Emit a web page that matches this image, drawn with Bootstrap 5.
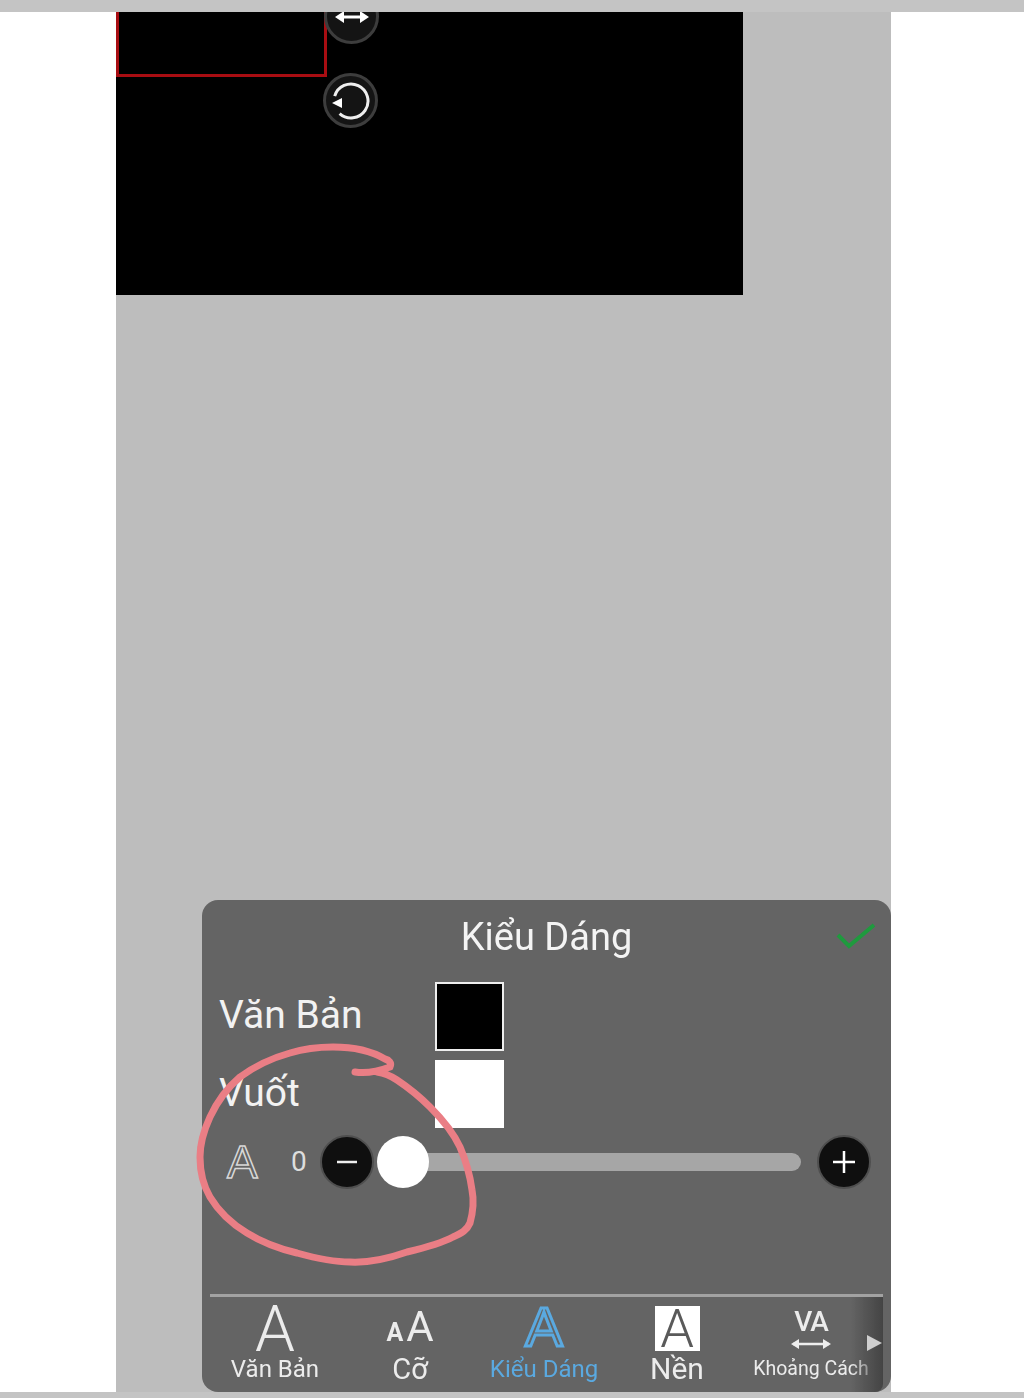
<!DOCTYPE html>
<html lang="vi">
<head>
  <meta charset="UTF-8">
  <meta name="viewport" content="width=device-width, initial-scale=1">
  <title>Kiểu Dáng</title>
  <link href="https://cdn.jsdelivr.net/npm/bootstrap@5.3.3/dist/css/bootstrap.min.css" rel="stylesheet">
  <style>
    html, body { height: 1398px; overflow: hidden; }
    body { background: #fff; font-family: Roboto, "Liberation Sans", sans-serif; }
    .top-strip { height: 12px; background: #c4c4c4; }
    .bottom-strip { height: 6px; background: #c4c4c4; }
    .page-mid { height: 1380px; }
    .stage { width: 775px; margin-left: 116px; background: #bdbdbd; height: 100%; position: relative; }
    .canvas-box { width: 627px; height: 283px; background: #000; position: relative; overflow: hidden; }
    .sel-box { position: absolute; left: 0; top: -40px; width: 211px; height: 105px; border: 3px solid #a80d12; }
    .handle { position: absolute; width: 55px; height: 55px; border-radius: 50%; background: #141414; border: 3px solid #3d3d3d; }
    .handle svg { display: block; margin: 5px auto 0; }
    .h-resize { left: 208px; top: -23px; }
    .h-rotate { left: 207px; top: 61px; }
    .sheet { width: 689px; height: 492px; background: #646464; border-radius: 16px; color: #f2f2f2; padding: 0 8px; filter: blur(.4px); }
    .sheet-head { height: 72px; position: relative; }
    .sheet-title { font-size: 38px; line-height: 74px; color: #f4f4f4; }
    .ok-tick { position: absolute; right: 6px; top: 20px; }
    .color-row { height: 78px; }
    .color-label { width: 225px; padding-left: 9px; font-size: 39px; line-height: 1; padding-top: 24px; }
    .swatch { width: 69px; height: 69px; }
    .swatch-black { background: #000; border: 2px solid #eee; margin-top: 10px; }
    .swatch-white { background: #fff; margin-top: 10px; height: 68px; }
    .slider-row { height: 70px; padding-left: 17px; padding-right: 12px; margin-top: -1px; }
    .stroke-a { font-family: "Liberation Sans", sans-serif; font-size: 46px; line-height: 1; color: transparent; -webkit-text-stroke: 1.5px #d8d8d8; width: 44px; }
    .stroke-val { font-size: 28px; color: #ddd; width: 49px; padding-left: 20px; }
    .round-btn { width: 54px; height: 54px; flex: none; border-radius: 50%; background: #0f0f0f; border: 2px solid #4f4f4f; color: #fff; padding: 0; }
    .round-btn svg { display: block; margin: auto; }
    .track-wrap { flex: 1; height: 54px; position: relative; margin-right: 16px; }
    .track { position: absolute; left: 28px; right: 0; top: 18px; height: 18px; background: #a6a6a6; border-radius: 9px; }
    .thumb { position: absolute; left: 3px; top: 1px; width: 52px; height: 52px; border-radius: 50%; background: #fff; }
    .tab-bar { margin-top: 97px; border-top: 3px solid #a2a2a2; height: 98px; position: relative; }
    .tab-item { text-align: center; color: #ececec; flex: none; }
    .tab-glyph { height: 60px; line-height: 60px; display: block; }
    .tab-text { font-size: 24px; line-height: 24px; display: block; white-space: nowrap; }
    .tab-one { width: 130px; }
    .tab-two { width: 140px; }
    .tab-three { width: 128px; }
    .tab-four { width: 138px; }
    .tab-five { width: 130px; }
    .text-mid { font-size: 29px; }
    .text-big { font-size: 30px; }
    .text-tiny { font-size: 19.5px; }
    .tab-glyph.glyph-thin { font-size: 64px; font-weight: 300; line-height: 66px; }
    .glyph-small { font-size: 25px; font-weight: 700; margin-right: 3px; }
    .glyph-mid { font-size: 42px; font-weight: 400; }
    .tab-active { color: #5aa9e0; }
    .glyph-blue { font-family: "Liberation Sans", sans-serif; font-size: 56px; color: transparent; -webkit-text-stroke: 3px #5aa9e0; }
    .glyph-boxed { display: inline-block; width: 45px; height: 45px; background: #fff; color: #5a5a5a; font-size: 54px; line-height: 45px; font-weight: 300; margin-top: 9px; vertical-align: top; }
    .va-top { font-size: 28px; font-weight: 500; display: block; line-height: 28px; padding-top: 11px; letter-spacing: -1px; }
    .arrow-line { display: block; margin: 1px auto 0; }
    .more-fade { position: absolute; right: 0; top: 0; bottom: 0; width: 32px; background: linear-gradient(to right, transparent, #444); border-radius: 0 0 8px 0; }
    .more-arrow { position: absolute; right: 1px; top: 38px; width: 0; height: 0; border-left: 15px solid #cfcfcf; border-top: 8px solid transparent; border-bottom: 8px solid transparent; }
    .pen-mark { position: absolute; left: 0; top: 0; pointer-events: none; }
  </style>
</head>
<body>
  <div class="top-strip"></div>
  <div class="page-mid">
    <div class="stage d-flex flex-column justify-content-between">
      <div class="canvas-box">
        <div class="sel-box"></div>
        <div class="handle h-resize">
          <svg width="40" height="40" viewBox="0 0 40 40"><path d="M6 20H34" stroke="#fff" stroke-width="3"/><path d="M3 20l9-6v12zM37 20l-9-6v12z" fill="#fff"/></svg>
        </div>
        <div class="handle h-rotate">
          <svg width="40" height="40" viewBox="0 0 40 40" fill="none"><path d="M8.600 32.600A17 17 0 1 0 3.700 15.100" stroke="#eee" stroke-width="3"/><path d="M1 22l10-5v10z" fill="#fff"/></svg>
        </div>
      </div>

      <div class="sheet align-self-end">
        <div class="sheet-head text-center">
          <div class="sheet-title">Kiểu Dáng</div>
          <svg class="ok-tick" width="42" height="32" viewBox="0 0 42 32" fill="none"><path d="M3 15l11 11L39 5" stroke="#1f9a3e" stroke-width="4"/></svg>
        </div>
        <div class="d-flex color-row">
          <div class="color-label">Văn Bản</div>
          <div class="swatch swatch-black"></div>
        </div>
        <div class="d-flex color-row">
          <div class="color-label">Vuốt</div>
          <div class="swatch swatch-white"></div>
        </div>
        <div class="d-flex align-items-center slider-row">
          <span class="stroke-a">A</span>
          <span class="stroke-val">0</span>
          <button type="button" class="btn round-btn"><svg width="22" height="4" viewBox="0 0 22 4"><path d="M1 2H21" stroke="#eee" stroke-width="2.500"/></svg></button>
          <div class="track-wrap">
            <div class="track"></div>
            <div class="thumb"></div>
          </div>
          <button type="button" class="btn round-btn"><svg width="24" height="24" viewBox="0 0 24 24"><path d="M1 12H23M12 1V23" stroke="#fff" stroke-width="2.500"/></svg></button>
        </div>
        <div class="tab-bar d-flex">
          <div class="tab-item tab-one"><span class="tab-glyph glyph-thin">A</span><span class="tab-text">Văn Bản</span></div>
          <div class="tab-item tab-two"><span class="tab-glyph glyph-mid"><span class="glyph-small">A</span>A</span><span class="tab-text text-mid">Cỡ</span></div>
          <div class="tab-item tab-three tab-active"><span class="tab-glyph glyph-blue">A</span><span class="tab-text">Kiểu Dáng</span></div>
          <div class="tab-item tab-four"><span class="tab-glyph"><span class="glyph-boxed">A</span></span><span class="tab-text text-big">Nền</span></div>
          <div class="tab-item tab-five">
            <span class="tab-glyph">
              <span class="va-top">VA</span>
              <svg class="arrow-line" width="40" height="14" viewBox="0 0 40 14"><path d="M2 7H38" stroke="#eee" stroke-width="2.500"/><path d="M0 7l8-5v10zM40 7l-8-5v10z" fill="#eee"/></svg>
            </span>
            <span class="tab-text text-tiny">Khoảng Cách</span>
          </div>
          <div class="more-fade"><div class="more-arrow"></div></div>
        </div>
      </div>

      <svg class="pen-mark" width="775" height="1380" viewBox="116 12 775 1380" fill="none">
        <path d="M355 1072C368 1074 382 1070 390 1067C392 1063 389 1060 385 1059C370 1050 350 1047 333 1047C318 1047 303 1049 290 1053C272 1058 255 1066 240 1077C227 1088 217 1102 210 1117C204 1130 200 1143 200 1157C200 1172 203 1185 210 1197C219 1212 232 1224 247 1233C263 1243 280 1249 297 1253C315 1258 332 1262 350 1262C370 1263 390 1258 407 1252C424 1248 440 1244 453 1237C462 1233 467 1230 470 1223C473 1212 474 1200 472 1190C470 1175 466 1161 460 1147C453 1132 442 1119 430 1107C420 1097 409 1088 397 1080C391 1076 384 1073 377 1072" stroke="#ea7e85" stroke-width="7" stroke-linecap="round"/>
      </svg>
    </div>
  </div>
  <div class="bottom-strip"></div>
  <script src="https://cdn.jsdelivr.net/npm/bootstrap@5.3.3/dist/js/bootstrap.bundle.min.js"></script>
</body>
</html>
